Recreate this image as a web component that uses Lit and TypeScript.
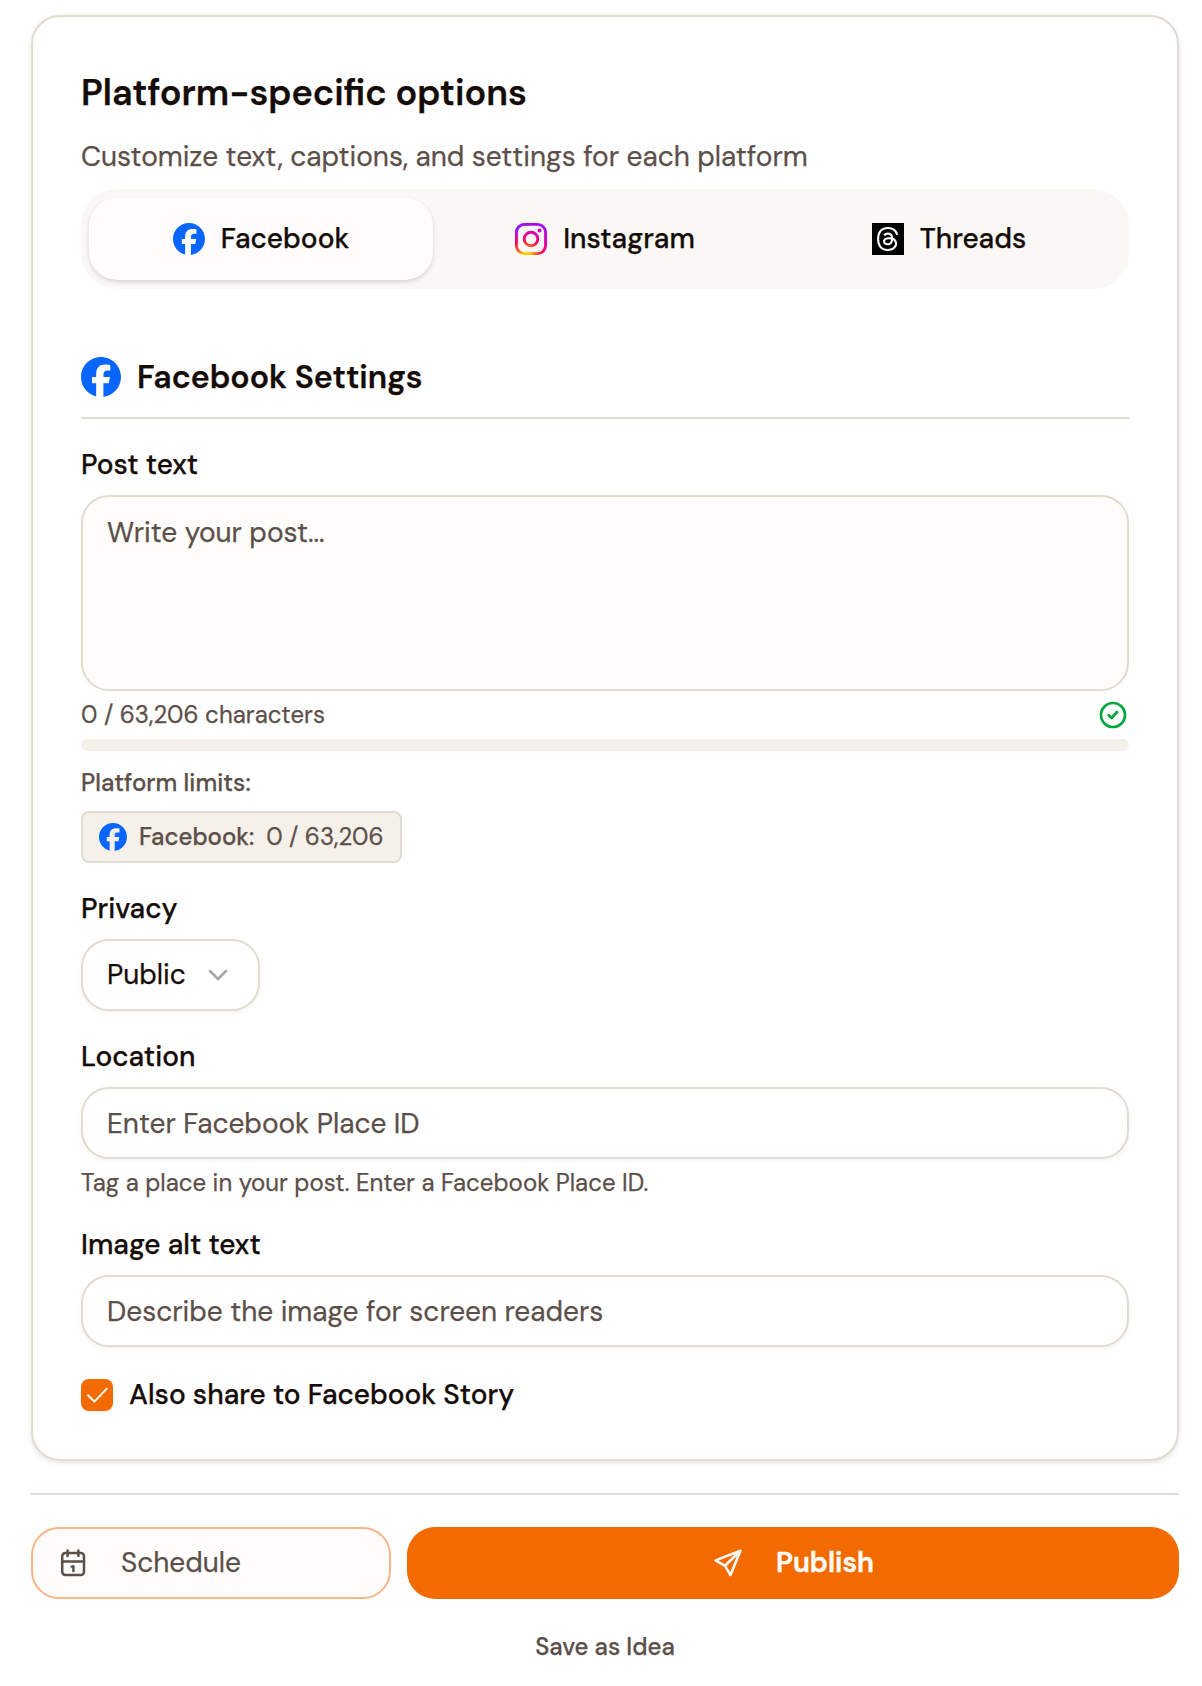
import { LitElement, html, css, svg } from "lit";
import { customElement, property, state } from "lit/decorators.js";
import { classMap } from "lit/directives/class-map.js";

type Platform = "facebook" | "instagram" | "threads";

const glyphs = {
  facebook: svg`
    <path fill="#0866ff" d="M9.101 23.691v-7.98H6.627v-3.667h2.474v-1.58c0-4.085 1.848-5.978 5.858-5.978.401 0 .955.042 1.468.103a8.68 8.68 0 0 1 1.141.195v3.325a8.623 8.623 0 0 0-.653-.036 26.805 26.805 0 0 0-.733-.009c-.707 0-1.259.096-1.675.309a1.686 1.686 0 0 0-.679.622c-.258.42-.374.995-.374 1.752v1.297h3.919l-.386 2.103-.287 1.564h-3.246v8.245C19.396 23.238 24 18.179 24 12.044c0-6.627-5.373-12-12-12s-12 5.373-12 12c0 5.628 3.874 10.35 9.101 11.647Z"/>`,
  instagram: svg`
    <defs>
      <radialGradient id="ig" gradientUnits="userSpaceOnUse" cx="8.5" cy="24.5" r="25">
        <stop offset="0" stop-color="#ffd600"/>
        <stop offset="0.12" stop-color="#ffc800"/>
        <stop offset="0.3" stop-color="#ff5a1e"/>
        <stop offset="0.5" stop-color="#ff0069"/>
        <stop offset="0.78" stop-color="#d300c5"/>
        <stop offset="1" stop-color="#a40cf5"/>
      </radialGradient>
      <radialGradient id="igb" gradientUnits="userSpaceOnUse" cx="0" cy="1" r="11">
        <stop offset="0" stop-color="#6a3cff"/>
        <stop offset="0.4" stop-color="#8a20fa" stop-opacity="0.8"/>
        <stop offset="1" stop-color="#a40cf5" stop-opacity="0"/>
      </radialGradient>
    </defs>
    <g fill="none" stroke="url(#ig)" stroke-width="2.15">
      <rect x="1.08" y="1.08" width="21.84" height="21.84" rx="6"/>
      <circle cx="12" cy="12" r="5.1"/>
    </g>
    <circle cx="18.4" cy="5.6" r="1.45" fill="url(#ig)"/>
    <rect x="1.08" y="1.08" width="21.84" height="21.84" rx="6" fill="none" stroke="url(#igb)" stroke-width="2.15"/>`,
  threads: svg`
    <rect width="24" height="24" fill="#000"/>
    <path transform="translate(2.7 3) scale(.75)" fill="#fff" d="M12.186 24h-.007c-3.581-.024-6.334-1.205-8.184-3.509C2.35 18.44 1.5 15.586 1.472 12.01v-.017c.03-3.579.879-6.43 2.525-8.482C5.845 1.205 8.6.024 12.18 0h.014c2.746.02 5.043.725 6.826 2.098 1.677 1.29 2.858 3.13 3.509 5.467l-2.04.569c-1.104-3.96-3.898-5.984-8.304-6.015-2.91.022-5.11.936-6.54 2.717C4.307 6.504 3.616 8.914 3.589 12c.027 3.086.718 5.496 2.057 7.164 1.43 1.783 3.631 2.698 6.54 2.717 2.623-.02 4.358-.631 5.8-2.045 1.647-1.613 1.618-3.593 1.09-4.798-.31-.71-.873-1.3-1.634-1.75-.192 1.352-.622 2.446-1.284 3.272-.886 1.102-2.14 1.704-3.73 1.79-1.202.065-2.361-.218-3.259-.801-1.063-.689-1.685-1.74-1.752-2.964-.065-1.19.408-2.285 1.33-3.082.88-.76 2.119-1.207 3.583-1.291a13.853 13.853 0 0 1 3.02.142c-.126-.742-.375-1.332-.75-1.757-.513-.586-1.308-.883-2.359-.89h-.029c-.844 0-1.992.232-2.721 1.32L7.734 7.847c.98-1.454 2.568-2.256 4.478-2.256h.044c3.194.02 5.097 1.975 5.287 5.388.108.046.216.094.321.142 1.49.7 2.58 1.761 3.154 3.07.797 1.82.871 4.79-1.548 7.158-1.85 1.81-4.094 2.628-7.277 2.65Zm1.003-11.69c-.242 0-.487.007-.739.021-1.836.103-2.98.946-2.916 2.143.067 1.256 1.452 1.839 2.784 1.767 1.224-.065 2.818-.543 3.086-3.71a10.5 10.5 0 0 0-2.215-.221z"/>`,
};

@customElement("platform-icon")
export class PlatformIcon extends LitElement {
  static styles = css`
    :host { display: block; width: 32px; height: 32px; flex: none; }
    svg { display: block; width: 100%; height: 100%; }
  `;
  @property() name: Platform = "facebook";
  render() {
    return html`<svg viewBox="0 0 24 24" aria-hidden="true">${glyphs[this.name]}</svg>`;
  }
}

const tabs: { id: Platform; label: string }[] = [
  { id: "facebook", label: "Facebook" },
  { id: "instagram", label: "Instagram" },
  { id: "threads", label: "Threads" },
];

@customElement("app-root")
export class AppRoot extends LitElement {
  static styles = css`
    :host {
      display: block;
      box-sizing: border-box;
      height: 1686px;
      padding: 15px 23px 0 31px;
      background: #fff;
      color: #150c07;
      font-family: "DM Sans", Inter, "Open Sans", sans-serif;
      font-size: 28px;
      font-weight: 400;
      font-variation-settings: "opsz" 14;
      -webkit-text-stroke: 0.25px currentColor;
      --line: #e1dcd0;
      --muted: #5c4f49;
      --soft: #f5f1ea;
      --accent: #f26a00;
    }
    *, *::before { box-sizing: border-box; }
    h2, h3, p { margin: 0; }
    svg { display: block; flex: none; }
    button, input, textarea { font: inherit; font-variation-settings: inherit; color: inherit; letter-spacing: inherit; }
    .card {
      height: 1446px;
      padding: 48px;
      border: 2px solid var(--line);
      border-radius: 29px;
      box-shadow: 0 2px 5px rgba(0, 0, 0, 0.11);
    }
    .title { font-size: 36px; font-weight: 600; line-height: 55px; font-variation-settings: "opsz" 18; }
    .subtitle { margin-top: 17px; line-height: 39px; color: var(--muted); }
    .tabs {
      display: grid;
      grid-template-columns: repeat(3, 1fr);
      height: 100px;
      margin-top: 13px;
      padding: 9px 8px;
      border-radius: 36px;
      background: #f9f8f5;
    }
    .tab {
      display: flex;
      align-items: center;
      justify-content: center;
      gap: 16px;
      padding: 0;
      border: 0;
      border-radius: 28px;
      background: none;
      font-weight: 500;
    }
    .tab.active { background: #fefdfb; box-shadow: 0 2px 4px rgba(0, 0, 0, 0.15); }
    .tab span { margin-top: -2px; }
    .section-head {
      display: flex;
      align-items: center;
      gap: 16px;
      margin-top: 68px;
      padding-bottom: 20px;
      border-bottom: 2px solid var(--line);
    }
    .section-head platform-icon { width: 40px; height: 40px; }
    .section-title { font-size: 32px; font-weight: 600; line-height: 40px; font-variation-settings: "opsz" 16; }
    .label { display: block; line-height: 30px; margin: 31px 0 15px; font-weight: 500; }
    .label.alt { margin-top: 32px; }
    .textarea {
      display: block;
      width: 100%;
      height: 196px;
      padding: 16px 24px;
      border: 2px solid var(--line);
      border-radius: 28px;
      background: #fefdfb;
      line-height: 40px;
      resize: none;
    }
    ::placeholder { color: var(--muted); opacity: 1; }
    .count-row {
      display: flex;
      align-items: center;
      justify-content: space-between;
      height: 28px;
      margin: 10px 2px 10px 0;
      color: var(--muted);
      font-size: 24px;
      letter-spacing: 0.04px;
      font-variation-settings: "opsz" 12;
    }
    .count-row span { margin-top: -2px; }
    .meter { height: 12px; border-radius: 6px; background: var(--soft); }
    .limits { margin-top: 17px; font-size: 24px; font-weight: 500; line-height: 29px; letter-spacing: 0.06px; color: var(--muted); font-variation-settings: "opsz" 12; }
    .chip {
      display: flex;
      align-items: center;
      width: 321px;
      height: 52px;
      margin-top: 14px;
      padding: 0 16px;
      border: 2px solid var(--line);
      border-radius: 8px;
      background: var(--soft);
      color: var(--muted);
      font-size: 24px;
      font-variation-settings: "opsz" 12;
    }
    .chip platform-icon { width: 28px; height: 28px; }
    .chip span { margin-top: -2px; }
    .chip .chip-name { margin-left: 12px; margin-right: 12px; font-weight: 500; }
    .select {
      display: flex;
      align-items: center;
      justify-content: space-between;
      width: 179px;
      height: 72px;
      padding: 0 30px 2px 24px;
      border: 2px solid var(--line);
      border-radius: 28px;
      background: #fff;
      box-shadow: 0 2px 4px rgba(0, 0, 0, 0.05);
    }
    .input {
      display: block;
      width: 100%;
      height: 72px;
      padding: 0 24px;
      border: 2px solid var(--line);
      border-radius: 28px;
      background: #fff;
      box-shadow: 0 2px 4px rgba(0, 0, 0, 0.05);
    }
    .help { margin-top: 9px; font-size: 24px; line-height: 30px; letter-spacing: 0.04px; color: var(--muted); font-variation-settings: "opsz" 12; }
    .check-row { display: flex; align-items: center; gap: 16px; height: 32px; margin-top: 32px; line-height: 32px; font-weight: 500; }
    .check-row .caption { margin-top: -1px; }
    .box { display: block; width: 32px; height: 32px; border-radius: 8px; background: var(--accent); box-shadow: 0 2px 3px rgba(0, 0, 0, 0.06); }
    .rule { height: 2px; margin-top: 32px; background: var(--line); }
    .actions { display: flex; gap: 16px; height: 72px; margin-top: 32px; }
    .action { display: flex; align-items: center; gap: 34px; border-radius: 28px; }
    .action span { margin-top: -2px; }
    .schedule {
      width: 360px;
      padding: 0 26px;
      border: 2px solid #fab488;
      background: #fefdfb;
      color: var(--muted);
    }
    .publish {
      flex: 1;
      justify-content: center;
      padding: 0 0 0 2px;
      border: 0;
      background: var(--accent);
      color: #fffaf5;
      font-weight: 600;
      -webkit-text-stroke-width: 0.5px;
    }
    .idea {
      display: block;
      margin: 33px auto 0;
      padding: 0;
      border: 0;
      background: none;
      font-size: 24px;
      font-weight: 500;
      line-height: 30px;
      font-variation-settings: "opsz" 12;
      color: var(--muted);
    }
  `;

  @state() private active: Platform = "facebook";
  @state() private story = true;

  render() {
    return html`
      <section class="card">
        <h2 class="title">Platform-specific options</h2>
        <p class="subtitle">Customize text, captions, and settings for each platform</p>
        <div class="tabs" role="tablist">
          ${tabs.map(
            (t) => html`<button
              role="tab"
              class=${classMap({ tab: true, active: this.active === t.id })}
              @click=${() => (this.active = t.id)}
            ><platform-icon .name=${t.id}></platform-icon><span>${t.label}</span></button>`
          )}
        </div>

        <div class="section-head">
          <platform-icon name="facebook"></platform-icon>
          <h3 class="section-title">Facebook Settings</h3>
        </div>

        <label class="label" for="post">Post text</label>
        <textarea class="textarea" id="post" placeholder="Write your post..."></textarea>
        <div class="count-row">
          <span>0 / 63,206 characters</span>
          <svg width="28" height="28" viewBox="0 0 28 28" fill="none" stroke="#00a63e" stroke-width="2.7" stroke-linecap="round" stroke-linejoin="round">
            <circle cx="14" cy="14" r="12" /><path d="M9.7 14.2 12.6 17 18 11" />
          </svg>
        </div>
        <div class="meter"></div>
        <p class="limits">Platform limits:</p>
        <div class="chip">
          <platform-icon name="facebook"></platform-icon>
          <span class="chip-name">Facebook:</span><span>0 / 63,206</span>
        </div>

        <span class="label">Privacy</span>
        <button class="select">
          <span>Public</span>
          <svg width="20" height="14" viewBox="0 0 20 14" fill="none" stroke="#aaa5a3" stroke-width="2.6" stroke-linecap="round" stroke-linejoin="round">
            <path d="M2 4 10 12 18 4" />
          </svg>
        </button>

        <label class="label" for="place">Location</label>
        <input class="input" id="place" placeholder="Enter Facebook Place ID" />
        <p class="help">Tag a place in your post. Enter a Facebook Place ID.</p>

        <label class="label alt" for="alt">Image alt text</label>
        <input class="input" id="alt" placeholder="Describe the image for screen readers" />

        <div class="check-row" role="checkbox" aria-checked=${this.story} @click=${() => (this.story = !this.story)}>
          <span class="box">
            ${this.story
              ? html`<svg width="32" height="32" viewBox="0 0 32 32" fill="none" stroke="#fffaf5" stroke-width="2" stroke-linecap="round" stroke-linejoin="round"><path d="M7 16.2 13.4 22.6 25.8 9.6" /></svg>`
              : null}
          </span>
          <span class="caption">Also share to Facebook Story</span>
        </div>
      </section>

      <div class="rule"></div>
      <div class="actions">
        <button class="action schedule">
          <svg width="28" height="28" viewBox="0 0 28 28" fill="none" stroke="currentColor" stroke-width="2.5" stroke-linecap="round" stroke-linejoin="round">
            <rect x="3.2" y="4" width="21.8" height="22" rx="3.2" />
            <path d="M8.6 1.5v5.6M19.4 1.5v5.6M3.2 12.6h21.8M12.6 17.6 14.4 17.2V22" />
          </svg>
          <span>Schedule</span>
        </button>
        <button class="action publish">
          <svg width="28" height="28" viewBox="0 0 28 28" fill="none" stroke="currentColor" stroke-width="2.6" stroke-linecap="round" stroke-linejoin="round">
            <path d="M26.4 1.7 1.6 11.4 11 16.8 16.5 26ZM11 16.8 26.4 1.7" />
          </svg>
          <span>Publish</span>
        </button>
      </div>
      <button class="idea">Save as Idea</button>
    `;
  }
}
